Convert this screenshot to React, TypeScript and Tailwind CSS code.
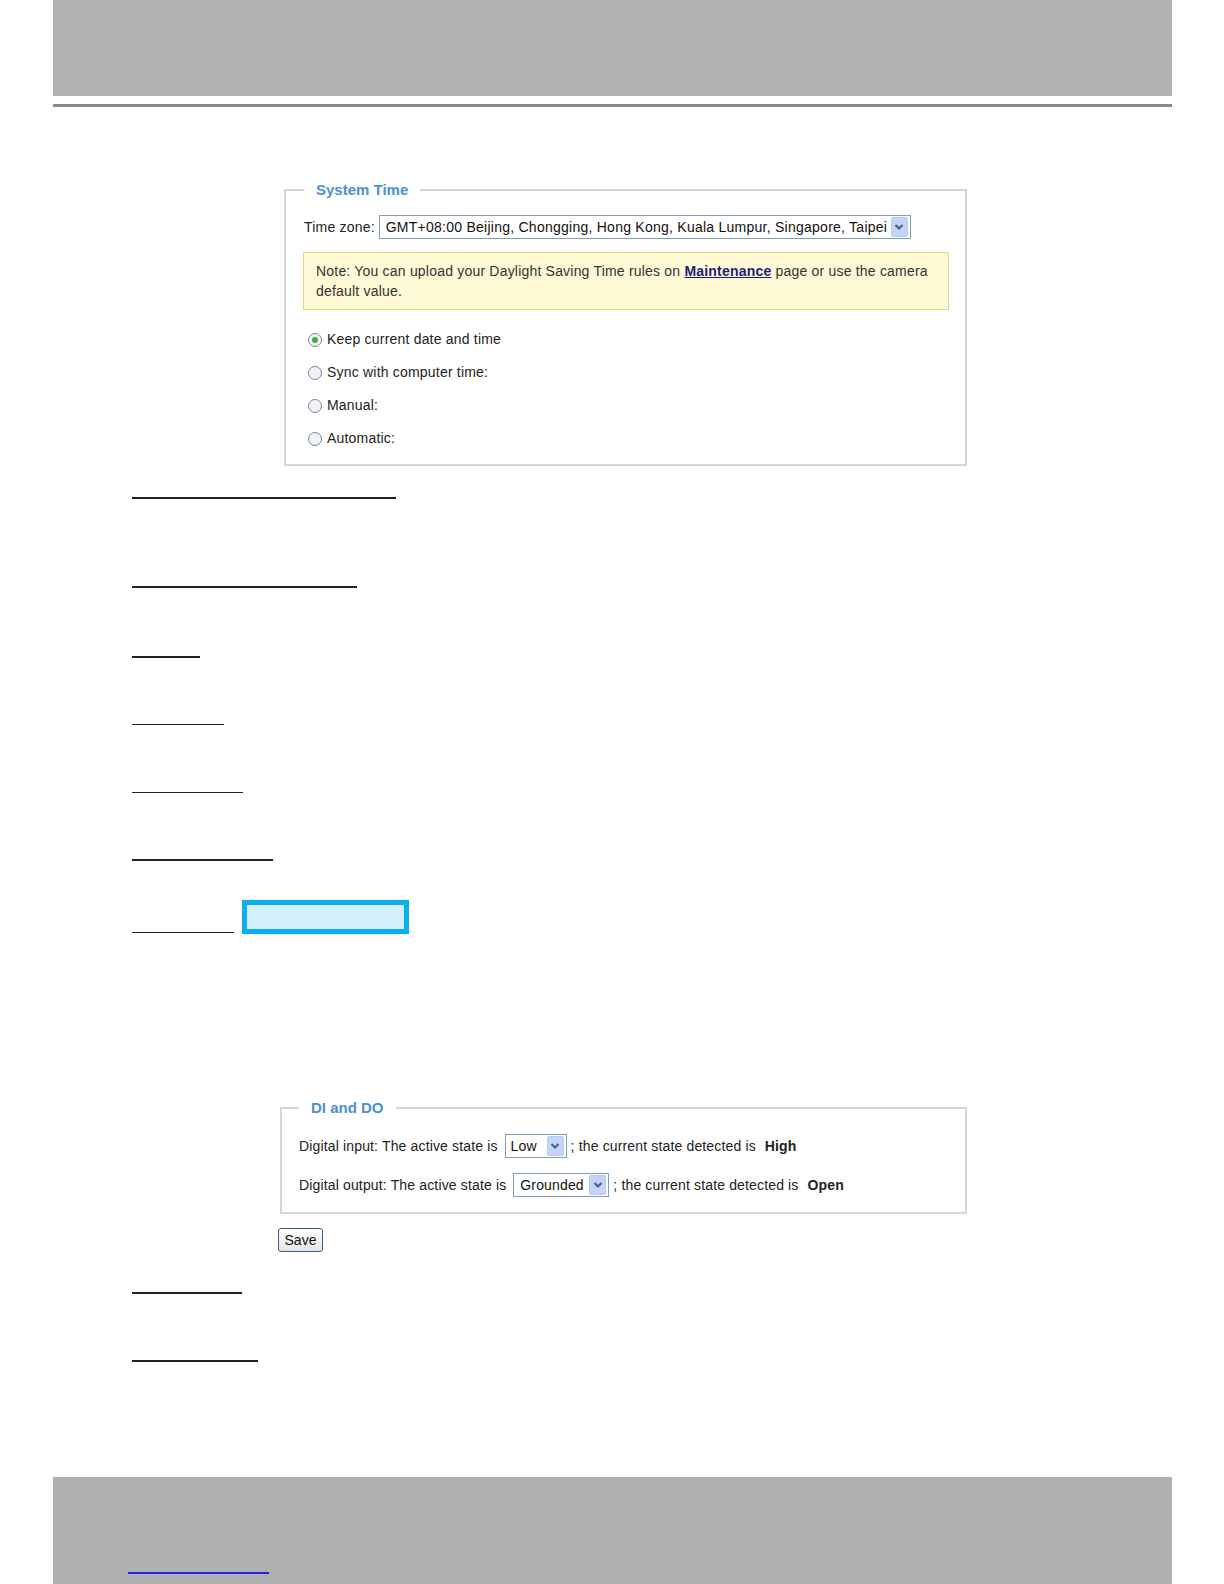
import React from "react";

const RADIOS = [
  { label: "Keep current date and time", checked: true },
  { label: "Sync with computer time:", checked: false },
  { label: "Manual:", checked: false },
  { label: "Automatic:", checked: false },
];

function Chevron() {
  return (
    <svg width="10" height="8" viewBox="0 0 10 8" fill="none">
      <path d="M1.5 2 L5 5.5 L8.5 2" stroke="#4d6185" strokeWidth="2.2" />
    </svg>
  );
}

function FakeSelect({
  value,
  width,
  padLeft,
}: {
  value: string;
  width: string;
  padLeft: string;
}) {
  return (
    <div
      className={`flex h-[24px] items-center justify-between border border-[#7f9db9] bg-white pr-[2px] ${width} ${padLeft}`}
    >
      <span className="whitespace-nowrap text-[14px] text-[#111]">{value}</span>
      <span className="flex h-[20px] w-[17px] items-center justify-center rounded-[2px] border border-[#b9cbf3] bg-[#c3d4fb]">
        <Chevron />
      </span>
    </div>
  );
}

function Radio({ checked }: { checked: boolean }) {
  return (
    <span className="flex h-[14px] w-[14px] items-center justify-center rounded-full border border-[#7289a6] bg-[#f2f2f2]">
      {checked && <span className="h-[6px] w-[6px] rounded-full bg-[#3fae3f]" />}
    </span>
  );
}

function Rule({ width, thick }: { width: string; thick?: boolean }) {
  return <div className={`ml-[132px] bg-[#222] ${width} ${thick ? "h-[2px]" : "h-px"}`} />;
}

export default function App() {
  return (
    <div className="w-[1224px] min-h-[1584px] bg-white font-['Liberation_Sans',Arial,sans-serif] text-[#222]">
      <div className="ml-[53px] h-[96px] w-[1119px] bg-[#b2b2b2]" />
      <div className="ml-[53px] mt-[8px] h-[3px] w-[1119px] bg-[#8c8c8c]" />

      <fieldset className="ml-[284px] mt-[74px] w-[683px] border-2 border-[#d6d6d6] pb-[9px] pl-[18px] pt-[16px] tracking-[0.2px]">
        <legend className="px-[12px] text-[15px] font-bold leading-[18px] tracking-normal text-[#4a90d8]">
          System Time
        </legend>
        <div className="flex items-center gap-[4px] text-[14px]">
          <span>Time zone:</span>
          <div className="tracking-[0.25px]">
            <FakeSelect
              value="GMT+08:00 Beijing, Chongging, Hong Kong, Kuala Lumpur, Singapore, Taipei"
              width="w-[532px]"
              padLeft="pl-[6px]"
            />
          </div>
        </div>
        <div className="-ml-px mt-[13px] w-[646px] border border-[#ecd77a] bg-[#fff9d6] px-[12px] pb-[8px] pt-[8px] text-[14px] leading-[20px] text-[#333]">
          <p>
            <span>Note: You can upload your Daylight Saving Time rules on </span>
            <a href="#" className="font-bold text-[#1c1c7c] underline">
              Maintenance
            </a>
            <span> page or use the camera</span>
          </p>
          <p>default value.</p>
        </div>
        <div className="mt-[13px] flex flex-col">
          {RADIOS.map((r) => (
            <label key={r.label} className="ml-[4px] flex h-[33px] items-center gap-[5px] text-[14px]">
              <Radio checked={r.checked} />
              <span>{r.label}</span>
            </label>
          ))}
        </div>
      </fieldset>

      <div className="mt-[31px]">
        <Rule width="w-[264px]" thick />
      </div>
      <div className="mt-[87px]">
        <Rule width="w-[225px]" thick />
      </div>
      <div className="mt-[68px]">
        <Rule width="w-[68px]" thick />
      </div>
      <div className="mt-[66px]">
        <Rule width="w-[92px]" />
      </div>
      <div className="mt-[67px]">
        <Rule width="w-[111px]" />
      </div>
      <div className="mt-[66px]">
        <Rule width="w-[141px]" thick />
      </div>
      <div className="mt-[39px] flex items-end">
        <div className="mb-[1px] ml-[132px] h-px w-[102px] bg-[#222]" />
        <div className="ml-[8px] h-[34px] w-[167px] border-[5px] border-[#0ab0ec] bg-[#d3effb]" />
      </div>

      <fieldset className="ml-[280px] mt-[165px] w-[687px] border-2 border-[#d6d6d6] pb-[15px] pl-[17px] pt-[17px] tracking-[0.15px]">
        <legend className="px-[12px] text-[15px] font-bold leading-[18px] tracking-normal text-[#4a90d8]">
          DI and DO
        </legend>
        <div className="flex items-center text-[14px]">
          <span>Digital input: The active state is</span>
          <div className="ml-[7px]">
            <FakeSelect value="Low" width="w-[62px]" padLeft="pl-[5px]" />
          </div>
          <span className="ml-[4px]">; the current state detected is</span>
          <span className="ml-[9px] font-bold">High</span>
        </div>
        <div className="mt-[15px] flex items-center text-[14px]">
          <span>Digital output: The active state is</span>
          <div className="ml-[7px]">
            <FakeSelect value="Grounded" width="w-[96px]" padLeft="pl-[6px]" />
          </div>
          <span className="ml-[4px]">; the current state detected is</span>
          <span className="ml-[9px] font-bold">Open</span>
        </div>
      </fieldset>

      <button className="ml-[278px] mt-[14px] flex h-[24px] w-[45px] items-center justify-center rounded-[3px] border border-[#3f5f80] bg-[linear-gradient(#ffffff,#e4e4e4)] text-[14px] text-[#111]">
        Save
      </button>

      <div className="mt-[40px]">
        <Rule width="w-[110px]" thick />
      </div>
      <div className="mt-[66px]">
        <Rule width="w-[126px]" thick />
      </div>

      <footer className="ml-[53px] mt-[115px] h-[107px] w-[1119px] bg-[#b0b0b0] pl-[75px] pt-[95px]">
        <div className="h-[2px] w-[141px] bg-[#2424e0]" />
      </footer>
    </div>
  );
}
